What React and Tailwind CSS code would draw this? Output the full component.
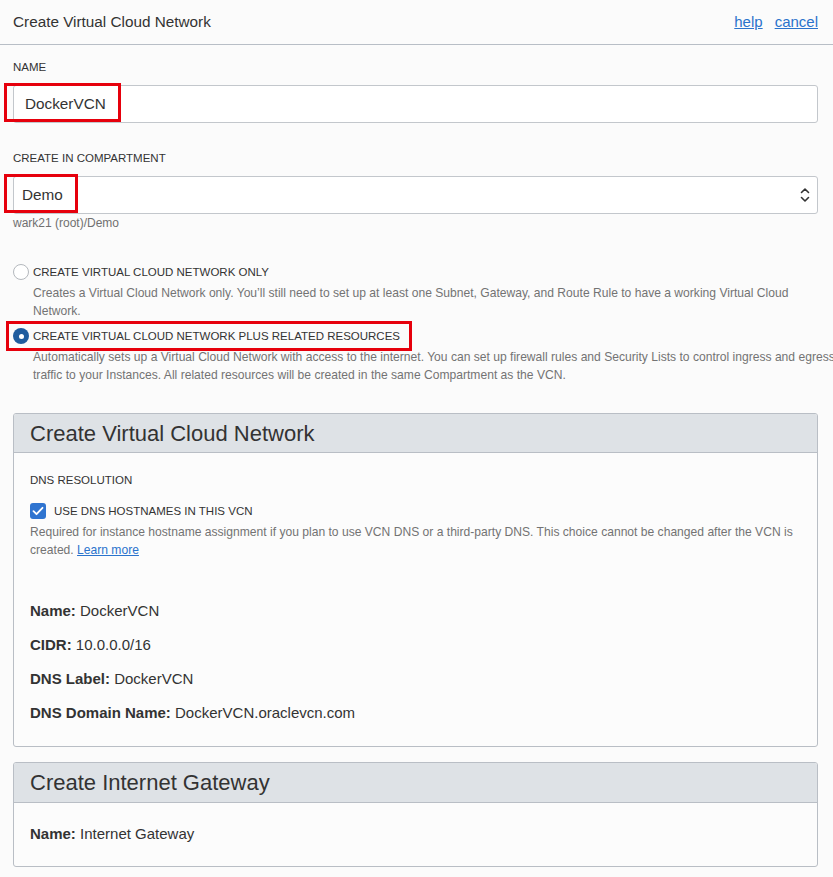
import React from "react";

function Chevrons() {
  return (
    <svg width="10" height="16" viewBox="0 0 10 16" fill="none" stroke="#333" strokeWidth="1.6" strokeLinecap="round" strokeLinejoin="round">
      <path d="M1.5 5.5 L5 2 L8.5 5.5" />
      <path d="M1.5 10.5 L5 14 L8.5 10.5" />
    </svg>
  );
}

function Radio({ checked }) {
  if (checked) {
    return (
      <span className="flex h-[16px] w-[16px] shrink-0 items-center justify-center rounded-full bg-[#1f5c9e]">
        <span className="h-[5px] w-[5px] rounded-full bg-white" />
      </span>
    );
  }
  return <span className="h-[16px] w-[16px] shrink-0 rounded-full border border-[#b4b8bd] bg-white" />;
}

function Field({ label, value }) {
  return (
    <div className="text-[15px] leading-[18px] text-[#333]">
      <span className="font-bold">{label}</span> {value}
    </div>
  );
}

export default function App() {
  return (
    <div className="min-h-[877px] w-[833px] overflow-hidden bg-[#fbfbfb] font-['Liberation_Sans',Arial,sans-serif] text-[#333]">
      <div className="flex h-[45px] items-center justify-between border-b border-[#b8bec6] pr-[15px] pl-[13px]">
        <div className="text-[15.3px] text-[#333]">Create Virtual Cloud Network</div>
        <div className="flex gap-[12px] text-[15px] text-[#2a73cc]">
          <span className="underline">help</span>
          <span className="underline">cancel</span>
        </div>
      </div>

      <div className="pt-[15px] pr-[15px] pl-[13px]">
        <div className="text-[11.5px] leading-[14px]">NAME</div>
        <div className="relative mt-[11px]">
          <div className="flex h-[38px] items-center rounded-[3px] border border-[#c3c7cc] bg-white px-[11px] text-[15.3px] text-[#333]">
            DockerVCN
          </div>
          <div className="absolute -top-[2px] -left-[9px] h-[39px] w-[117px] border-[3px] border-[#e6000c]" />
        </div>

        <div className="mt-[28px] text-[11.5px] leading-[14px]">CREATE IN COMPARTMENT</div>
        <div className="relative mt-[11px]">
          <div className="flex h-[38px] items-center justify-between rounded-[3px] border border-[#c3c7cc] bg-white pr-[7px] pl-[8px] text-[15.3px] text-[#333]">
            <span>Demo</span>
            <Chevrons />
          </div>
          <div className="absolute -top-[2px] -left-[9px] h-[39px] w-[74px] border-[3px] border-[#e6000c]" />
        </div>
        <div className="mt-[2px] text-[12px] leading-[14px] text-[#707070]">wark21 (root)/Demo</div>

        <div className="mt-[34px] flex items-center gap-[4px]">
          <Radio />
          <span className="text-[11.5px] leading-[16px]">CREATE VIRTUAL CLOUD NETWORK ONLY</span>
        </div>
        <div className="mt-[4px] pl-[20px] text-[12.1px] leading-[18px] whitespace-nowrap text-[#737373]">
          <div>Creates a Virtual Cloud Network only. You’ll still need to set up at least one Subnet, Gateway, and Route Rule to have a working Virtual Cloud</div>
          <div>Network.</div>
        </div>

        <div className="relative mt-[8px] flex items-center gap-[4px]">
          <Radio checked />
          <span className="text-[11.5px] leading-[16px]">CREATE VIRTUAL CLOUD NETWORK PLUS RELATED RESOURCES</span>
          <div className="absolute -top-[7px] -left-[7px] h-[30px] w-[406px] border-[3px] border-[#e6000c]" />
        </div>
        <div className="mt-[4px] pl-[20px] text-[12.1px] leading-[18px] whitespace-nowrap text-[#737373]">
          <div>Automatically sets up a Virtual Cloud Network with access to the internet. You can set up firewall rules and Security Lists to control ingress and egress</div>
          <div>traffic to your Instances. All related resources will be created in the same Compartment as the VCN.</div>
        </div>

        <div className="mt-[29px] overflow-hidden rounded-[3px] border border-[#b9bec5] bg-[#fcfcfc]">
          <div className="flex h-[39px] items-center border-b border-[#b9bec5] bg-[#dee2e6] px-[16px] text-[22px] text-[#333]">
            Create Virtual Cloud Network
          </div>
          <div className="px-[16px] pt-[20px] pb-[24px]">
            <div className="text-[11.5px] leading-[14px]">DNS RESOLUTION</div>
            <div className="mt-[16px] flex items-center gap-[8px]">
              <span className="flex h-[16px] w-[16px] items-center justify-center rounded-[3px] bg-[#2f74d0]">
                <svg width="12" height="10" viewBox="0 0 12 10" fill="none" stroke="white" strokeWidth="1.8" strokeLinecap="round" strokeLinejoin="round">
                  <path d="M1.5 5.2 L4.5 8.2 L10.5 1.8" />
                </svg>
              </span>
              <span className="text-[11.5px] leading-[16px]">USE DNS HOSTNAMES IN THIS VCN</span>
            </div>
            <div className="mt-[4px] text-[12.1px] leading-[18px] text-[#737373]">
              <div>Required for instance hostname assignment if you plan to use VCN DNS or a third-party DNS. This choice cannot be changed after the VCN is</div>
              <div>
                created. <span className="text-[#2a73cc] underline">Learn more</span>
              </div>
            </div>
            <div className="mt-[43px] flex flex-col gap-[16px]">
              <Field label="Name:" value="DockerVCN" />
              <Field label="CIDR:" value="10.0.0.0/16" />
              <Field label="DNS Label:" value="DockerVCN" />
              <Field label="DNS Domain Name:" value="DockerVCN.oraclevcn.com" />
            </div>
          </div>
        </div>

        <div className="mt-[15px] overflow-hidden rounded-[3px] border border-[#b9bec5] bg-[#fcfcfc]">
          <div className="flex h-[40px] items-center border-b border-[#b9bec5] bg-[#dee2e6] px-[16px] text-[22px] text-[#333]">
            Create Internet Gateway
          </div>
          <div className="px-[16px] pt-[22px] pb-[23px]">
            <Field label="Name:" value="Internet Gateway" />
          </div>
        </div>
      </div>
    </div>
  );
}
